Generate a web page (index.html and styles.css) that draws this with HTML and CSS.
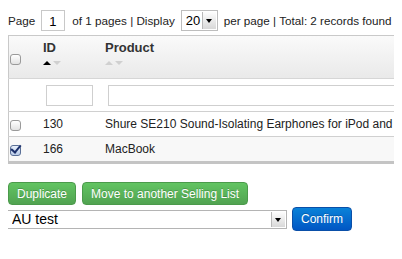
FILE: index.html
```html
<!DOCTYPE html>
<html lang="en">
<head>
  <meta charset="UTF-8">
  <title>Selling List Items</title>
  <link rel="stylesheet" href="styles.css">
</head>
<body>

  <div class="pager">
    <span>Page</span>
    <input type="text" class="page-input" value="1">
    <span>of 1 pages | Display</span>
    <span class="mini-select"><select><option>20</option></select></span>
    <span>per page | Total: 2 records found</span>
  </div>

  <table class="grid">
    <thead>
      <tr class="head-row">
        <th class="col-check"><input type="checkbox" class="cb"></th>
        <th class="col-id">ID<div class="sort"><span class="up on"></span><span class="down"></span></div></th>
        <th class="col-product">Product<div class="sort"><span class="up"></span><span class="down"></span></div></th>
      </tr>
      <tr class="filter-row">
        <td></td>
        <td><input type="text" class="filter-id"></td>
        <td><input type="text" class="filter-product"></td>
      </tr>
    </thead>
    <tbody>
      <tr>
        <td class="col-check"><input type="checkbox" class="cb"></td>
        <td>130</td>
        <td>Shure SE210 Sound-Isolating Earphones for iPod and iPhone</td>
      </tr>
      <tr class="alt">
        <td class="col-check"><input type="checkbox" class="cb" checked></td>
        <td>166</td>
        <td>MacBook</td>
      </tr>
    </tbody>
  </table>

  <div class="actions">
    <button type="button" class="btn btn-green">Duplicate</button>
    <button type="button" class="btn btn-green">Move to another Selling List</button>
  </div>

  <div class="move-to">
    <span class="list-select"><select><option>AU test</option></select></span>
    <button type="button" class="btn btn-blue">Confirm</button>
  </div>

</body>
</html>
```

FILE: styles.css
```css
html {
  overflow: hidden;
}
body {
  font-family: "Liberation Sans", Arial, sans-serif;
  font-size: 12px;
  color: #222;
  margin: 8px;
  background: #fff;
}
.pager {
  display: flex;
  align-items: center;
  height: 22px;
  margin-top: 1px;
  font-size: 11.7px;
  white-space: nowrap;
}
.pager > * {
  flex-shrink: 0;
}
.page-input {
  box-sizing: border-box;
  width: 24px;
  height: 21px;
  padding: 3px 0 0 7px;
  margin: 0 7px 0 6px;
  border: 1px solid #c8c8c8;
  font: inherit;
  font-size: 13px;
  color: #000;
}
.mini-select {
  position: relative;
  display: inline-block;
  box-sizing: border-box;
  width: 37px;
  height: 21px;
  border: 1px solid #bdbdbd;
  margin: 0 6px 0 6px;
}
.mini-select select,
.list-select select {
  appearance: none;
  -webkit-appearance: none;
  border: none;
  background: #fff;
  font: inherit;
  font-size: 13px;
  color: #000;
  width: 100%;
  height: 100%;
  padding: 0 0 0 4px;
  outline: none;
}
.mini-select::after,
.list-select::after {
  content: "";
  position: absolute;
  right: 1px;
  top: 1px;
  bottom: 1px;
  width: 13px;
  background: linear-gradient(#fdfdfd, #d8d8d8);
  border-left: 1px solid #b8b8b8;
}
.mini-select::before,
.list-select::before {
  content: "";
  position: absolute;
  right: 5px;
  top: 8px;
  border-left: 3px solid transparent;
  border-right: 3px solid transparent;
  border-top: 4px solid #000;
  z-index: 1;
}

.cb {
  appearance: none;
  -webkit-appearance: none;
  box-sizing: border-box;
  position: relative;
  width: 11px;
  height: 11px;
  margin: 2px 0 0 1px;
  border: 1px solid #9a9a9a;
  border-radius: 3px;
  background: linear-gradient(#ffffff, #e2e2e2);
  vertical-align: middle;
}
.cb:checked {
  border-color: #5a6f96;
  background: linear-gradient(#e8f0fb, #b9cbe8);
}
.cb:checked::after {
  content: "";
  position: absolute;
  left: 2px;
  top: -3px;
  width: 4px;
  height: 8px;
  border-right: 2px solid #1b2f6b;
  border-bottom: 2px solid #1b2f6b;
  transform: rotate(40deg);
}

.grid {
  border-collapse: collapse;
  width: 620px;
  margin-top: 4px;
  border-top: 1px solid #c9c9c9;
  border-left: 1px solid #c9c9c9;
  border-bottom: 3px solid #c4c4c4;
}
.grid th,
.grid td {
  text-align: left;
  padding: 0;
  vertical-align: middle;
}
.head-row {
  height: 43px;
  background: linear-gradient(#fafafa, #e9e9e9);
}
.head-row th {
  font-weight: bold;
  font-size: 13px;
  color: #333;
  vertical-align: top;
  padding-top: 4px;
}
.head-row th.col-check {
  vertical-align: middle;
  padding-top: 0;
}
.col-check {
  width: 27px;
  text-align: center;
}
.col-id {
  width: 55px;
}
.grid th:nth-child(2),
.grid th:nth-child(3),
.grid td:nth-child(2),
.grid td:nth-child(3) {
  padding-left: 7px;
}
.sort {
  display: flex;
  gap: 2px;
  margin-top: 6px;
  height: 5px;
}
.sort span {
  width: 0;
  height: 0;
  border-left: 4px solid transparent;
  border-right: 4px solid transparent;
}
.sort .up {
  border-bottom: 4px solid #d0d0d0;
}
.sort .up.on {
  border-bottom-color: #000;
}
.sort .down {
  border-top: 4px solid #d0d0d0;
}
.filter-row {
  height: 33px;
  border-top: 1px solid #d6d6d6;
  background: #fff;
}
.filter-row input {
  display: block;
  box-sizing: border-box;
  height: 21px;
  padding: 0 3px;
  margin-left: 3px;
  margin-top: 1px;
  border: 1px solid #cfcfcf;
  font: inherit;
}
.filter-id {
  width: 47px;
}
.filter-product {
  width: 500px;
}
.grid tbody tr {
  height: 25px;
  border-top: 1px solid #d0d0d0;
  color: #222;
  font-size: 12px;
}
.grid tbody tr.alt {
  background: #f8f8f8;
  height: 26px;
}

.actions {
  display: flex;
  gap: 6px;
  margin-top: 18px;
}
.btn {
  font-family: "Liberation Sans", Arial, sans-serif;
  font-size: 12px;
  color: #fff;
  border-radius: 4px;
  height: 23px;
  padding: 0 8px;
  cursor: pointer;
  text-shadow: 0 -1px 0 rgba(0, 0, 0, 0.2);
}
.btn-green {
  background: linear-gradient(#62c462, #51a351);
  border: 1px solid #4b9a4b;
}
.btn-blue {
  background: linear-gradient(#0a82d8, #0056c4);
  border: 1px solid #0a4fa8;
  width: 60px;
  padding: 0;
  height: 24px;
}
.move-to {
  display: flex;
  align-items: center;
  gap: 5px;
  margin-top: 2px;
  margin-left: -1px;
}
.list-select {
  position: relative;
  display: inline-block;
  width: 278px;
  height: 17px;
  border: 1px solid #b4b4b4;
}
.list-select select {
  padding-left: 4px;
  font-size: 14px;
}
.list-select::before {
  top: 7px;
}
```
